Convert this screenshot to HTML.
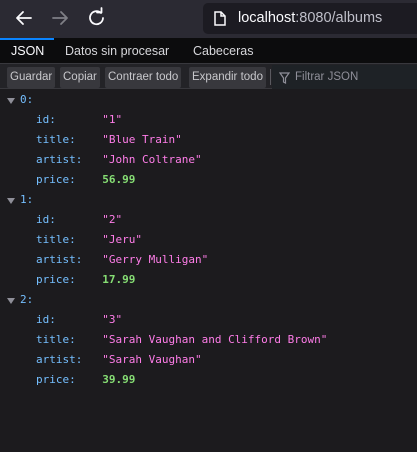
<!DOCTYPE html>
<html><head><style>
*{margin:0;padding:0;box-sizing:border-box}
body{width:417px;height:452px;background:#1c1b1e;font-family:"Liberation Sans",sans-serif;overflow:hidden;position:relative}
.top{position:absolute;left:0;top:0;width:417px;height:38px;background:#2b2a33}
.addr{position:absolute;left:203px;top:3px;width:220px;height:31px;background:#1c1b22;border-radius:5px;color:#fbfbfe;font-size:14.5px;line-height:31px;padding-left:35px}
.addr span{color:#bfbfc9}
.tabs{position:absolute;left:0;top:38px;width:417px;height:25px;background:#0c0c0d;color:#d7d7db;font-size:12.5px}
.tabs div{position:absolute;top:6px}
.bar{position:absolute;left:0;top:63px;width:417px;height:26px;background:#232327;border-top:1px solid #38383d;border-bottom:1px solid #38383d}
.btn{position:absolute;top:3px;height:21px;background:#38383d;color:#c8c8cc;font-size:11.5px;line-height:21px;padding:0 3px;border-radius:2px}
.filter{position:absolute;left:272px;top:1px;width:150px;height:24px;background:#1e2226;color:#8f8f99;font-size:11.5px;line-height:25px;padding-left:23px}
.row{position:absolute;font-family:"DejaVu Sans Mono","Liberation Mono",monospace;font-size:11px;color:#75bfff;white-space:pre}
.s{color:#ff7de9}.n{color:#86de74;font-weight:bold}
.tri{position:absolute;width:0;height:0;border-left:4px solid transparent;border-right:4px solid transparent;border-top:6px solid #8f8f99}
</style></head><body>
<div class="top">
<svg width="200" height="38" style="position:absolute;left:0;top:0" fill="none" stroke-width="1.8" stroke-linecap="round" stroke-linejoin="round">
<path d="M17 18h14M17 18l6-6M17 18l6 6" stroke="#fbfbfe"/>
<path d="M53 18h14M67 18l-6-6M67 18l-6 6" stroke="#7f7f86"/>
<path d="M101 13a6.5 6.5 0 1 0 2 5" stroke="#fbfbfe"/><path d="M97 12.5h4.5V8" stroke="#fbfbfe"/>
</svg>
<div class="addr"><svg width="12" height="15" style="position:absolute;left:11px;top:8px" fill="none" stroke="#fbfbfe" stroke-width="1.5"><path d="M1 1h6l4 4v9H1z"/><path d="M7 1v4h4"/></svg><b style="font-weight:normal">localhost</b><span>:8080/albums</span></div>
</div>
<div class="tabs">
<div style="left:0;top:0;width:54px;height:2px;background:#0a84ff"></div>
<div style="left:11px;color:#fbfbfe">JSON</div>
<div style="left:65px">Datos sin procesar</div>
<div style="left:193px">Cabeceras</div>
</div>
<div class="bar">
<div class="btn" style="left:7px">Guardar</div>
<div class="btn" style="left:60px">Copiar</div>
<div class="btn" style="left:105px">Contraer todo</div>
<div class="btn" style="left:189px">Expandir todo</div>
<div style="position:absolute;left:270px;top:5px;width:1px;height:16px;background:#5a5a60"></div>
<div class="filter"><svg width="11" height="12" style="position:absolute;left:7px;top:7px" fill="none" stroke="#8f8f99" stroke-width="1.2"><path d="M1 1h9L6.5 6v5L4.5 10V6z"/></svg>Filtrar JSON</div>
</div>

<div class="tri" style="left:7px;top:98px"></div><div class="row" style="left:20px;top:93px">0:</div>
<div class="row" style="left:36px;top:113px">id:       <span class="s">"1"</span></div>
<div class="row" style="left:36px;top:133px">title:    <span class="s">"Blue Train"</span></div>
<div class="row" style="left:36px;top:153px">artist:   <span class="s">"John Coltrane"</span></div>
<div class="row" style="left:36px;top:173px">price:    <span class="n">56.99</span></div>

<div class="tri" style="left:7px;top:198px"></div><div class="row" style="left:20px;top:193px">1:</div>
<div class="row" style="left:36px;top:213px">id:       <span class="s">"2"</span></div>
<div class="row" style="left:36px;top:233px">title:    <span class="s">"Jeru"</span></div>
<div class="row" style="left:36px;top:253px">artist:   <span class="s">"Gerry Mulligan"</span></div>
<div class="row" style="left:36px;top:273px">price:    <span class="n">17.99</span></div>

<div class="tri" style="left:7px;top:298px"></div><div class="row" style="left:20px;top:293px">2:</div>
<div class="row" style="left:36px;top:313px">id:       <span class="s">"3"</span></div>
<div class="row" style="left:36px;top:333px">title:    <span class="s">"Sarah Vaughan and Clifford Brown"</span></div>
<div class="row" style="left:36px;top:353px">artist:   <span class="s">"Sarah Vaughan"</span></div>
<div class="row" style="left:36px;top:373px">price:    <span class="n">39.99</span></div>
</body></html>
